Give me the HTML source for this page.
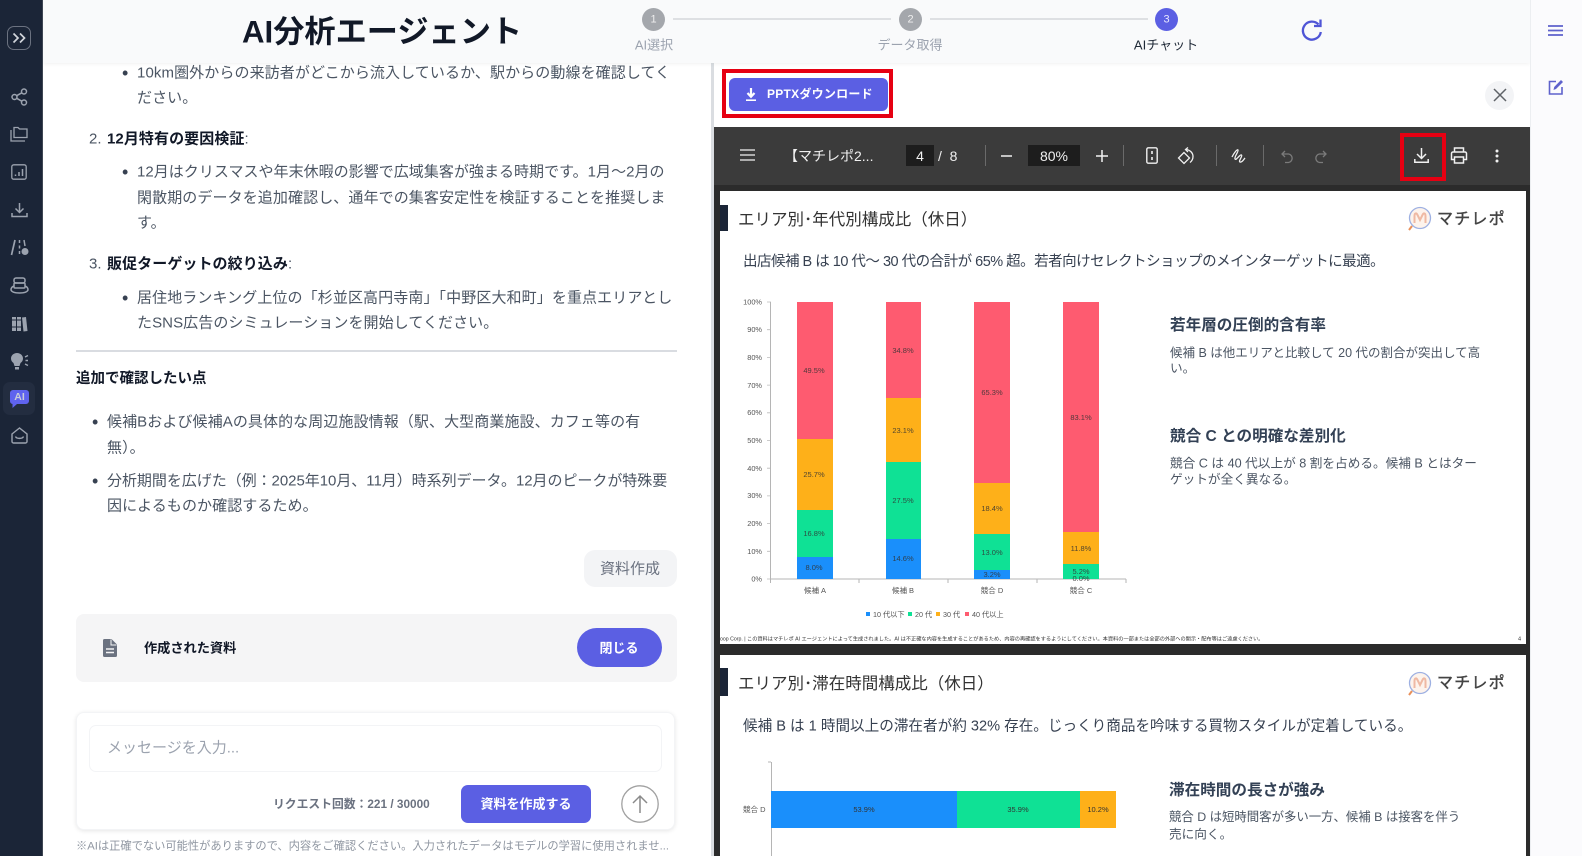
<!DOCTYPE html>
<html lang="ja">
<head>
<meta charset="utf-8">
<title>AI分析エージェント</title>
<style>
html,body{margin:0;padding:0;background:#fff}
body{width:1582px;height:856px;position:relative;overflow:hidden;font-family:"Liberation Sans","Noto Sans CJK JP",sans-serif;color:#4b5563}
.b{position:absolute;box-sizing:border-box}
.t{position:absolute;white-space:nowrap;line-height:1;transform:translateY(-50%)}
.c{position:absolute;white-space:nowrap;line-height:1;transform:translate(-50%,-50%)}
.m{font-size:15px;color:#4b5563;margin-top:1px;letter-spacing:.08px}
.s{font-weight:700;color:#111827}
.h{font-size:15.6px;font-weight:700;color:#334155}
.p{font-size:12.650px;color:#4b5563}
.st{font-size:13px;color:#9ca3af}
.lg{font-size:16px;font-weight:400;color:#444;letter-spacing:1.200px;-webkit-text-stroke:.4px #444}
svg.i{position:absolute;overflow:visible;fill:none}
</style>
</head>
<body>

<!-- Left chat pane -->
<div class="t m" style="left:122px;top:72px;font-size:18px;color:#374151">•</div>
<div class="t m" style="left:137px;top:72px;letter-spacing:.1px">10km圏外からの来訪者がどこから流入しているか、駅からの動線を確認してく</div>
<div class="t m" style="left:137px;top:97px">ださい。</div>
<div class="t m" style="left:89px;top:138px">2.</div>
<div class="t m" style="left:107px;top:138px"><span class="s">12月特有の要因検証</span>:</div>
<div class="t m" style="left:122px;top:171px;font-size:18px;color:#374151">•</div>
<div class="t m" style="left:137px;top:171px;letter-spacing:.03px">12月はクリスマスや年末休暇の影響で広域集客が強まる時期です。1月〜2月の</div>
<div class="t m" style="left:137px;top:197px;letter-spacing:.1px">閑散期のデータを追加確認し、通年での集客安定性を検証することを推奨しま</div>
<div class="t m" style="left:137px;top:222px">す。</div>
<div class="t m" style="left:89px;top:263px">3.</div>
<div class="t m" style="left:107px;top:263px"><span class="s">販促ターゲットの絞り込み</span>:</div>
<div class="t m" style="left:122px;top:297px;font-size:18px;color:#374151">•</div>
<div class="t m" style="left:137px;top:297px;letter-spacing:.1px">居住地ランキング上位の「杉並区高円寺南」「中野区大和町」を重点エリアとし</div>
<div class="t m" style="left:137px;top:322px">たSNS広告のシミュレーションを開始してください。</div>
<div class="b" style="left:76px;top:350px;width:601px;height:2px;background:#d9dce1"></div>
<div class="t s" style="left:76px;top:379px;font-size:14.500px">追加で確認したい点</div>
<div class="t m" style="left:92px;top:421px;font-size:18px;color:#374151">•</div>
<div class="t m" style="left:107px;top:421px;letter-spacing:.09px">候補Bおよび候補Aの具体的な周辺施設情報（駅、大型商業施設、カフェ等の有</div>
<div class="t m" style="left:107px;top:447px">無）。</div>
<div class="t m" style="left:92px;top:480px;font-size:18px;color:#374151">•</div>
<div class="t m" style="left:107px;top:480px;letter-spacing:-.04px">分析期間を広げた（例：2025年10月、11月）時系列データ。12月のピークが特殊要</div>
<div class="t m" style="left:107px;top:505px">因によるものか確認するため。</div>

<div class="b" style="left:584px;top:550px;width:93px;height:37px;background:#f3f4f6;border-radius:11px"></div>
<div class="c" style="left:630px;top:569px;font-size:15px;color:#6b7280">資料作成</div>

<div class="b" style="left:76px;top:614px;width:601px;height:68px;background:#f5f5f6;border-radius:8px"></div>
<svg class="i" style="left:102px;top:638px" width="16" height="20" viewBox="0 0 16 20"><path d="M1 2.500A1.500 1.500 0 0 1 2.500 1H9.500L15 6.500V17.500A1.500 1.500 0 0 1 13.500 19H2.500A1.500 1.500 0 0 1 1 17.500Z" fill="#6b7280"/><path d="M4 11h8M4 14.500h8" stroke="#f5f5f6" stroke-width="1.500"/><path d="M9 1.500V7h5.500" stroke="#f5f5f6" stroke-width="1"/></svg>
<div class="t s" style="left:144px;top:648px;font-size:13.200px">作成された資料</div>
<div class="b" style="left:577px;top:628px;width:85px;height:39px;background:#5b5fe3;border-radius:20px"></div>
<div class="c" style="left:619px;top:648px;font-size:13px;font-weight:700;color:#fff">閉じる</div>

<div class="b" style="left:76px;top:712px;width:599px;height:118px;background:#fff;border:1px solid #f3f4f6;border-radius:8px;box-shadow:0 1px 4px rgba(0,0,0,.1)"></div>
<div class="b" style="left:89px;top:725px;width:573px;height:47px;background:#fff;border:1px solid #f3f4f6;border-radius:7px"></div>
<div class="t" style="left:107px;top:748px;font-size:15px;color:#9ca3af">メッセージを入力...</div>
<div class="t" style="left:273px;top:805px;font-size:11.800px;font-weight:700;color:#6b7280">リクエスト回数：221 / 30000</div>
<div class="b" style="left:461px;top:785px;width:130px;height:38px;background:#5b5fe3;border-radius:7px"></div>
<div class="c" style="left:526px;top:804px;font-size:13px;font-weight:700;color:#fff">資料を作成する</div>
<svg class="i" style="left:621px;top:785px" width="38" height="38" viewBox="0 0 38 38"><circle cx="19" cy="19" r="18.200" stroke="#a1a1a1" stroke-width="1.300" fill="#fff"/><path d="M19 28V11M12 18l7-7 7 7" stroke="#8a8a8a" stroke-width="1.500"/></svg>
<div class="t" style="left:76px;top:847px;font-size:11.250px;color:#8f96a1">※AIは正確でない可能性がありますので、内容をご確認ください。入力されたデータはモデルの学習に使用されませ...</div>

<div class="b" style="left:711px;top:63px;width:3px;height:793px;background:#dadde1"></div>

<!-- PDF pane -->
<div class="b" style="left:714px;top:63px;width:816px;height:63px;background:#fff"></div>
<div class="b" style="left:722px;top:69px;width:171px;height:49px;border:4px solid #e60012"></div>
<div class="b" style="left:729px;top:78px;width:159px;height:33px;background:#5b5fe3;border-radius:6px"></div>
<svg class="i" style="left:744px;top:87px" width="14" height="15" viewBox="0 0 14 15"><path d="M7 1v8M3.500 6 7 9.800 10.500 6" stroke="#fff" stroke-width="2.200"/><path d="M2 13.200h10" stroke="#fff" stroke-width="1.600"/></svg>
<div class="t" style="left:767px;top:94px;font-size:12px;font-weight:700;color:#fff;letter-spacing:.25px">PPTXダウンロード</div>
<div class="b" style="left:1485px;top:81px;width:29px;height:29px;background:#f3f4f6;border-radius:50%"></div>
<svg class="i" style="left:1493px;top:88px" width="14" height="14" viewBox="0 0 14 14"><path d="M1 1l12 12M13 1 1 13" stroke="#5f6368" stroke-width="1.500"/></svg>

<div class="b" style="left:714px;top:127px;width:816px;height:729px;background:#2b2b2b"></div>
<div class="b" style="left:714px;top:127px;width:816px;height:58px;background:#3b3b3b"></div>
<svg class="i" style="left:740px;top:149px" width="15" height="12" viewBox="0 0 15 12"><path d="M0 1h15M0 6h15M0 11h15" stroke="#f1f1f1" stroke-width="1.300"/></svg>
<div class="t" style="left:784px;top:156px;font-size:14px;color:#f1f1f1">【マチレポ2...</div>
<div class="b" style="left:906px;top:145px;width:28px;height:21px;background:#1d1d1d"></div>
<div class="c" style="left:920px;top:156px;font-size:14px;color:#f1f1f1">4</div>
<div class="t" style="left:938px;top:156px;font-size:14px;color:#f1f1f1">/&nbsp;&nbsp;8</div>
<div class="b" style="left:985px;top:145px;width:1px;height:21px;background:#6a6a6a"></div>
<svg class="i" style="left:1001px;top:155px" width="11" height="2" viewBox="0 0 11 2"><path d="M0 1h11" stroke="#f1f1f1" stroke-width="1.500"/></svg>
<div class="b" style="left:1028px;top:145px;width:52px;height:21px;background:#1d1d1d"></div>
<div class="c" style="left:1054px;top:156px;font-size:14px;color:#f1f1f1">80%</div>
<svg class="i" style="left:1096px;top:150px" width="12" height="12" viewBox="0 0 12 12"><path d="M0 6h12M6 0v12" stroke="#f1f1f1" stroke-width="1.500"/></svg>
<div class="b" style="left:1123px;top:145px;width:1px;height:21px;background:#6a6a6a"></div>
<svg class="i" style="left:1146px;top:147px" width="12" height="17" viewBox="0 0 12 17"><rect x=".8" y=".8" width="10.400" height="15.400" rx="1.500" stroke="#f1f1f1" stroke-width="1.400"/><path d="M6 4v3M6 10v3" stroke="#f1f1f1" stroke-width="1.600"/></svg>
<svg class="i" style="left:1177px;top:147px" width="18" height="18" viewBox="0 0 18 18"><path d="M7 5.500 1.500 11 7 16.500 12.500 11Z" stroke="#f1f1f1" stroke-width="1.300"/><path d="M9 2.500c4 .2 7 3.500 7 7 0 2.500-1 4.500-3 6" stroke="#f1f1f1" stroke-width="1.300"/><path d="M11 .5 8.500 2.500 11 5" stroke="#f1f1f1" stroke-width="1.300"/></svg>
<div class="b" style="left:1216px;top:145px;width:1px;height:21px;background:#6a6a6a"></div>
<svg class="i" style="left:1231px;top:148px" width="15" height="16" viewBox="0 0 15 16"><path d="M1 9C3 5 6 1 7 2S3 9 4 11 9 6 10.500 7 7 13 9 14 13 11 14 10" stroke="#f1f1f1" stroke-width="1.300"/></svg>
<div class="b" style="left:1263px;top:145px;width:1px;height:21px;background:#6a6a6a"></div>
<svg class="i" style="left:1281px;top:150px" width="13" height="13" viewBox="0 0 13 13"><path d="M4 1 1 4l3 3M1 4h6.500a4.300 4.300 0 0 1 0 8.500H4" stroke="#7b7b7b" stroke-width="1.300"/></svg>
<svg class="i" style="left:1314px;top:150px" width="13" height="13" viewBox="0 0 13 13"><path d="M9 1l3 3-3 3M12 4H5.500a4.300 4.300 0 0 0 0 8.500H9" stroke="#7b7b7b" stroke-width="1.300"/></svg>
<div class="b" style="left:1400px;top:133px;width:46px;height:48px;border:4px solid #e60012"></div>
<svg class="i" style="left:1414px;top:147px" width="15" height="17" viewBox="0 0 15 17"><path d="M7.500 1v10M3 7l4.500 4.500L12 7" stroke="#f1f1f1" stroke-width="1.500"/><path d="M.8 12v3.200h13.400V12" stroke="#f1f1f1" stroke-width="1.500"/></svg>
<svg class="i" style="left:1450px;top:147px" width="18" height="17" viewBox="0 0 18 17"><path d="M4.500 5V1h9v4M4.500 12.500H1.500V6.500A1.500 1.500 0 0 1 3 5h12a1.500 1.500 0 0 1 1.500 1.500v6h-3" stroke="#f1f1f1" stroke-width="1.500"/><rect x="4.500" y="10" width="9" height="6" stroke="#f1f1f1" stroke-width="1.500"/></svg>
<svg class="i" style="left:1495px;top:149px" width="4" height="14" viewBox="0 0 4 14"><circle cx="2" cy="2" r="1.500" fill="#f1f1f1"/><circle cx="2" cy="7" r="1.500" fill="#f1f1f1"/><circle cx="2" cy="12" r="1.500" fill="#f1f1f1"/></svg>

<!-- Slide 1 -->
<div class="b" style="left:720px;top:191px;width:806px;height:453px;background:#fff"></div>
<div class="b" style="left:720px;top:205px;width:8px;height:26px;background:#1b2537"></div>
<div class="t" style="left:738px;top:220px;font-size:16.500px;color:#333">エリア別･年代別構成比（休日）</div>
<div class="t" style="left:743px;top:262px;font-size:14.500px;color:#374151;letter-spacing:-.5px">出店候補 B は 10 代～ 30 代の合計が 65% 超。若者向けセレクトショップのメインターゲットに最適。</div>

<svg class="i" style="left:0;top:0" width="1582" height="856" viewBox="0 0 1582 856" font-family="'Liberation Sans','Noto Sans CJK JP',sans-serif">
<path d="M767 302h4M767 329.700h4M767 357.400h4M767 385.100h4M767 412.800h4M767 440.500h4M767 468.200h4M767 495.900h4M767 523.600h4M767 551.300h4M767 579h4" stroke="#bbb" stroke-width=".8"/>
<path d="M770.500 302V583M770.500 579H1126M859 579v4M948 579v4M1037 579v4M1126 579v4" stroke="#b5b5b5" stroke-width="1"/>
<g font-size="7.400" fill="#555" text-anchor="end">
<text x="762" y="304.500">100%</text><text x="762" y="332">90%</text><text x="762" y="360">80%</text><text x="762" y="388">70%</text><text x="762" y="415">60%</text><text x="762" y="443">50%</text><text x="762" y="471">40%</text><text x="762" y="498">30%</text><text x="762" y="526">20%</text><text x="762" y="554">10%</text><text x="762" y="581.500">0%</text>
</g>
<g>
<rect x="797" y="302" width="36" height="137" fill="#fe5b70"/><rect x="797" y="439" width="36" height="71" fill="#feb019"/><rect x="797" y="510" width="36" height="47" fill="#0fe195"/><rect x="797" y="557" width="36" height="22" fill="#1a8ffb"/>
<rect x="886" y="302" width="35" height="96" fill="#fe5b70"/><rect x="886" y="398" width="35" height="64" fill="#feb019"/><rect x="886" y="462" width="35" height="77" fill="#0fe195"/><rect x="886" y="539" width="35" height="40" fill="#1a8ffb"/>
<rect x="974" y="302" width="36" height="181" fill="#fe5b70"/><rect x="974" y="483" width="36" height="51" fill="#feb019"/><rect x="974" y="534" width="36" height="36" fill="#0fe195"/><rect x="974" y="570" width="36" height="9" fill="#1a8ffb"/>
<rect x="1063" y="302" width="36" height="230" fill="#fe5b70"/><rect x="1063" y="532" width="36" height="32" fill="#feb019"/><rect x="1063" y="564" width="36" height="15" fill="#0fe195"/>
</g>
<g font-size="7.500" fill="#333" fill-opacity=".85" text-anchor="middle">
<text x="814" y="373">49.5%</text><text x="814" y="477">25.7%</text><text x="814" y="536">16.8%</text><text x="814" y="570">8.0%</text>
<text x="903" y="353">34.8%</text><text x="903" y="433">23.1%</text><text x="903" y="503">27.5%</text><text x="903" y="561">14.6%</text>
<text x="992" y="395">65.3%</text><text x="992" y="511">18.4%</text><text x="992" y="555">13.0%</text><text x="992" y="577">3.2%</text>
<text x="1081" y="420">83.1%</text><text x="1081" y="551">11.8%</text><text x="1081" y="574">5.2%</text><text x="1081" y="581">0.0%</text>
</g>
<g font-size="7.500" fill="#555" text-anchor="middle">
<text x="815" y="593">候補 A</text><text x="903" y="593">候補 B</text><text x="992" y="593">競合 D</text><text x="1081" y="593">競合 C</text>
</g>
<rect x="866" y="612" width="4" height="4" fill="#1a8ffb"/><rect x="908" y="612" width="4" height="4" fill="#0fe195"/><rect x="936" y="612" width="4" height="4" fill="#feb019"/><rect x="965" y="612" width="4" height="4" fill="#fe5b70"/>
<g font-size="7.200" fill="#555"><text x="873" y="617">10 代以下</text><text x="915" y="617">20 代</text><text x="943" y="617">30 代</text><text x="972" y="617">40 代以上</text></g>
<text x="720" y="640.500" font-size="5.200" fill="#333">oop Corp. | この資料はマチレポ AI エージェントによって生成されました。AI は不正確な内容を生成することがあるため、内容の再確認をするようにしてください。本資料の一部または全部の外部への開示・配布等はご遠慮ください。</text>
<text x="1518" y="640.500" font-size="5.500" fill="#333">4</text>
<!-- page 1 logo -->
<g>
<circle cx="1420" cy="218" r="10.500" fill="#fdf3ec" stroke="#9db0e2" stroke-width="1.300"/>
<path d="M1414.500 223v-7c0-3 2-3.500 3-1l2.500 5 2.500-5c1-2.500 3-2 3 1v7" stroke="#efb9a3" stroke-width="2" fill="none"/>
<path d="M1412 226l-3 4" stroke="#e9905a" stroke-width="2"/>
</g>
</svg>
<div class="t lg" style="left:1437px;top:220px">マチレポ</div>

<div class="t h" style="left:1170px;top:326px">若年層の圧倒的含有率</div>
<div class="t p" style="left:1170px;top:353px;font-size:12.500px">候補 B は他エリアと比較して 20 代の割合が突出して高</div>
<div class="t p" style="left:1170px;top:369px">い。</div>
<div class="t h" style="left:1170px;top:437px">競合 C との明確な差別化</div>
<div class="t p" style="left:1170px;top:464px">競合 C は 40 代以上が 8 割を占める。候補 B とはター</div>
<div class="t p" style="left:1170px;top:480px">ゲットが全く異なる。</div>

<!-- Slide 2 -->
<div class="b" style="left:720px;top:655px;width:806px;height:201px;background:#fff"></div>
<div class="b" style="left:720px;top:668px;width:8px;height:28px;background:#1b2537"></div>
<div class="t" style="left:738px;top:684px;font-size:16.500px;color:#333">エリア別･滞在時間構成比（休日）</div>
<div class="t" style="left:743px;top:727px;font-size:14.600px;color:#374151">候補 B は 1 時間以上の滞在者が約 32% 存在。じっくり商品を吟味する買物スタイルが定着している。</div>
<svg class="i" style="left:0;top:0" width="1582" height="856" viewBox="0 0 1582 856" font-family="'Liberation Sans','Noto Sans CJK JP',sans-serif">
<circle cx="1420" cy="683" r="10.500" fill="#fdf3ec" stroke="#9db0e2" stroke-width="1.300"/>
<path d="M1414.500 688v-7c0-3 2-3.500 3-1l2.500 5 2.500-5c1-2.500 3-2 3 1v7" stroke="#efb9a3" stroke-width="2" fill="none"/>
<path d="M1412 691l-3 4" stroke="#e9905a" stroke-width="2"/>
<path d="M771.500 762V856M768 762h3" stroke="#b5b5b5" stroke-width="1"/>
<rect x="771" y="791" width="186" height="37" fill="#1a8ffb"/><rect x="957" y="791" width="123" height="37" fill="#0fe195"/><rect x="1080" y="791" width="36" height="37" fill="#feb019"/>
<g font-size="7.500" fill="#333" text-anchor="middle"><text x="864" y="812">53.9%</text><text x="1018" y="812">35.9%</text><text x="1098" y="812">10.2%</text></g>
<text x="743" y="812" font-size="7.500" fill="#555">競合 D</text>
</svg>
<div class="t lg" style="left:1437px;top:684px">マチレポ</div>
<div class="t h" style="left:1169px;top:791px">滞在時間の長さが強み</div>
<div class="t p" style="left:1169px;top:817px;font-size:12.400px">競合 D は短時間客が多い一方、候補 B は接客を伴う</div>
<div class="t p" style="left:1169px;top:835px">売に向く。</div>

<!-- Header -->
<div class="b" style="left:43px;top:0;width:1487px;height:63px;background:#f9fafb;box-shadow:0 1px 4px rgba(0,0,0,.06)"></div>
<div class="t" style="left:242px;top:31.500px;font-size:31.200px;font-weight:700;color:#111827">AI分析エージェント</div>
<div class="b" style="left:673px;top:18px;width:218px;height:2px;background:#dee0e3"></div>
<div class="b" style="left:930px;top:18px;width:218px;height:2px;background:#dee0e3"></div>
<div class="b" style="left:642px;top:8px;width:23px;height:23px;border-radius:50%;background:#a4a7ac"></div>
<div class="c" style="left:653.500px;top:19.500px;font-size:11px;color:#eee">1</div>
<div class="b" style="left:899px;top:8px;width:23px;height:23px;border-radius:50%;background:#a4a7ac"></div>
<div class="c" style="left:910.500px;top:19.500px;font-size:11px;color:#eee">2</div>
<div class="b" style="left:1155px;top:8px;width:23px;height:23px;border-radius:50%;background:#5b5fe3"></div>
<div class="c" style="left:1166.500px;top:19.500px;font-size:11px;color:#e8e8ff">3</div>
<div class="c st" style="left:654px;top:45px">AI選択</div>
<div class="c st" style="left:910px;top:45px">データ取得</div>
<div class="c st" style="left:1166px;top:45px;color:#1f2937">AIチャット</div>
<svg class="i" style="left:1301px;top:18px" width="22" height="24" viewBox="0 0 22 24"><path d="M17.500 6.500A9 9 0 1 0 19.800 14" stroke="#4f55d6" stroke-width="2.300"/><path d="M19.500 1.500V8H13" stroke="#4f55d6" stroke-width="2.300"/></svg>

<!-- Right rail -->
<div class="b" style="left:1530px;top:0;width:52px;height:856px;background:#fbfbfd;border-left:1px solid #eceef1"></div>
<svg class="i" style="left:1548px;top:25px" width="15" height="11" viewBox="0 0 15 11"><path d="M0 1h15M0 5.500h15M0 10h15" stroke="#5e62cc" stroke-width="1.700"/></svg>
<svg class="i" style="left:1548px;top:79px" width="16" height="16" viewBox="0 0 16 16"><path d="M8 2.500H1.500V15H14V8" stroke="#5e62cc" stroke-width="1.600"/><path d="M5.500 11l.7-3L13 1l2 2-7 7Z" fill="#5e62cc"/></svg>

<!-- Sidebar -->
<div class="b" style="left:0;top:0;width:43px;height:856px;background:#1b2537;border-right:1px solid #3e4653"></div>
<div class="b" style="left:7px;top:26px;width:24px;height:24px;border:1px solid #6b7280;border-radius:7px"></div>
<svg class="i" style="left:12px;top:32px" width="14" height="12" viewBox="0 0 14 12"><path d="M1.500 1.500 6 6l-4.500 4.500M8 1.500 12.500 6 8 10.500" stroke="#d1d5db" stroke-width="1.700"/></svg>
<svg class="i" style="left:11px;top:88px" width="17" height="18" viewBox="0 0 17 18" stroke="#9ca3af" stroke-width="1.500"><circle cx="3.500" cy="9" r="2.500"/><circle cx="13" cy="3.500" r="2.500"/><circle cx="13" cy="14.500" r="2.500"/><path d="M5.700 7.700 10.800 4.800M5.700 10.300l5.100 2.900"/></svg>
<svg class="i" style="left:10px;top:126px" width="18" height="16" viewBox="0 0 18 16" stroke="#9ca3af" stroke-width="1.300"><path d="M4 11.500V1.500h4l1.500 1.500H17v8.500Z"/><path d="M1 4v11h14"/></svg>
<svg class="i" style="left:11px;top:164px" width="16" height="16" viewBox="0 0 16 16"><rect x=".8" y=".8" width="14.400" height="14.400" rx="2" stroke="#9ca3af" stroke-width="1.300"/><path d="M4.500 12v-1.500M8 12V8M11.500 12V5" stroke="#9ca3af" stroke-width="1.500"/></svg>
<svg class="i" style="left:11px;top:202px" width="17" height="16" viewBox="0 0 17 16" stroke="#9ca3af" stroke-width="1.500"><path d="M8.500 1v9M4.500 6.500l4 4 4-4"/><path d="M1 11v3.500h15V11"/></svg>
<svg class="i" style="left:10px;top:239px" width="19" height="17" viewBox="0 0 19 17"><path d="M5 1 1.500 16" stroke="#9ca3af" stroke-width="1.700"/><path d="M9.500 1v3M9.500 6.500v3M9.500 12v3M14 1l1 6" stroke="#9ca3af" stroke-width="1.500"/><circle cx="15" cy="12.500" r="3.500" fill="#9ca3af"/></svg>
<svg class="i" style="left:10px;top:277px" width="19" height="17" viewBox="0 0 19 17" stroke="#9ca3af" stroke-width="1.500"><rect x="4" y="1" width="11" height="5" rx="2"/><rect x="4" y="6" width="11" height="5" rx="1"/><path d="M4 9C1 10 1 12.500 1 13c1 2.500 5 3 8.500 3s7.500-.5 8.500-3c0-.5 0-3-3-4"/></svg>
<svg class="i" style="left:11px;top:316px" width="17" height="16" viewBox="0 0 17 16"><rect x="1" y="1" width="4" height="14" fill="#9ca3af"/><rect x="6" y="1" width="4" height="14" fill="#9ca3af"/><path d="M11 1.500 15 1l1.500 14-4 .5Z" fill="#9ca3af"/><path d="M1 4h4M6 4h4M1 11h4M6 11h4" stroke="#1b2537"/></svg>
<svg class="i" style="left:10px;top:353px" width="19" height="17" viewBox="0 0 19 17"><path d="M7 0C3.500 0 1 2.500 1 5.500c0 2 1 3.500 2.500 4.500L4.500 13h5l1-3C12 9 13 7.500 13 5.500 13 2.500 10.500 0 7 0Z" fill="#9ca3af"/><rect x="5" y="14" width="4" height="2.500" fill="#9ca3af"/><path d="M15 4l3-1.500M15.500 7.500H18M15 11l3 1.500" stroke="#9ca3af" stroke-width="1.400"/></svg>
<div class="b" style="left:3px;top:382px;width:32px;height:33px;background:#232d40;border-radius:7px"></div>
<svg class="i" style="left:10px;top:390px" width="19" height="18" viewBox="0 0 19 18"><path d="M3 0h13a3 3 0 0 1 3 3v8a3 3 0 0 1-3 3H7l-4.500 4v-4A3 3 0 0 1 0 11V3a3 3 0 0 1 3-3Z" fill="#5f63ee"/></svg>
<div class="c" style="left:19.500px;top:397px;font-size:10.500px;font-weight:700;color:#c9cdd8">AI</div>
<svg class="i" style="left:11px;top:427px" width="17" height="17" viewBox="0 0 17 17" stroke="#9ca3af" stroke-width="1.400"><path d="M1 7 8.500 1 16 7v7.500A1.500 1.500 0 0 1 14.500 16h-12A1.500 1.500 0 0 1 1 14.500Z"/><path d="M4.500 9.500c1 2.500 7 2.500 8 0"/></svg>

</body>
</html>
